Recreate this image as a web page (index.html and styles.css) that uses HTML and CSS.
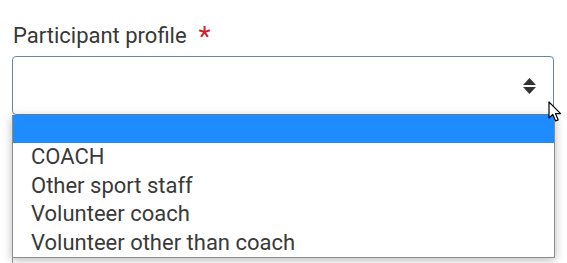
FILE: index.html
```html
<!DOCTYPE html>
<html lang="en">
<head>
<meta charset="utf-8">
<title>Participant profile</title>
<link rel="stylesheet" href="styles.css">
</head>
<body>
<div class="page">
  <div class="label-row">
    <span class="label">Participant profile</span>
    <span class="required">*</span>
  </div>
  <div class="select">
    <svg class="arrows" width="13" height="16" viewBox="0 0 13 16">
      <polygon points="6.5,0 13,7 0,7" fill="#333"/>
      <polygon points="0,9 13,9 6.5,16" fill="#333"/>
    </svg>
  </div>
  <div class="behind"></div>
  <ul class="listbox">
    <li class="option selected">&nbsp;</li>
    <li class="option">COACH</li>
    <li class="option">Other sport staff</li>
    <li class="option">Volunteer coach</li>
    <li class="option">Volunteer other than coach</li>
  </ul>
  <svg class="cursor" width="15" height="22" viewBox="0 0 15 22">
    <path d="M1 1 L1 17 L4.8 13.4 L7.6 20 L10.2 18.9 L7.5 12.6 L12.6 12.6 Z" fill="#fff" stroke="#000" stroke-width="1.2" stroke-linejoin="round"/>
  </svg>
</div>
</body>
</html>
```

FILE: styles.css
```css
html, body {
  margin: 0;
  padding: 0;
  background: #fff;
  overflow: hidden;
}
body {
  font-family: Roboto, "Liberation Sans", Arial, sans-serif;
  color: #333;
}
.page {
  position: relative;
  width: 542px;
  margin-left: 12px;
  padding-top: 24px;
  height: 239px;
}
.label-row {
  display: flex;
  align-items: flex-start;
  height: 24px;
  line-height: 24px;
}
.label {
  font-size: 22px;
  color: #383838;
  padding-left: 1px;
}
.required {
  color: #d0202e;
  font-size: 28px;
  line-height: 28px;
  margin-left: 12px;
  margin-top: -1px;
}
.select {
  box-sizing: border-box;
  margin-top: 8px;
  height: 59px;
  border: 1px solid #6a86a6;
  border-radius: 4px;
  display: flex;
  align-items: center;
  justify-content: flex-end;
  padding-right: 17px;
  padding-top: 1px;
}
.arrows {
  display: block;
}
.behind {
  border-left: 1px solid #9a9a9a;
  height: 160px;
}
.listbox {
  position: absolute;
  left: 0;
  top: 115px;
  width: 543px;
  box-sizing: border-box;
  margin: 0;
  padding: 0;
  list-style: none;
  background: #fff;
  border: 1px solid #8c8c8c;
  border-top: none;
  box-shadow: 0 2px 9px rgba(0, 0, 0, 0.28);
}
.option {
  height: 28.4px;
  line-height: 28.4px;
  font-size: 22px;
  padding-left: 18px;
  color: #3a3a3a;
  white-space: nowrap;
}
.option.selected {
  background: #1e8cff;
}
.cursor {
  position: absolute;
  left: 536px;
  top: 101px;
}
```
